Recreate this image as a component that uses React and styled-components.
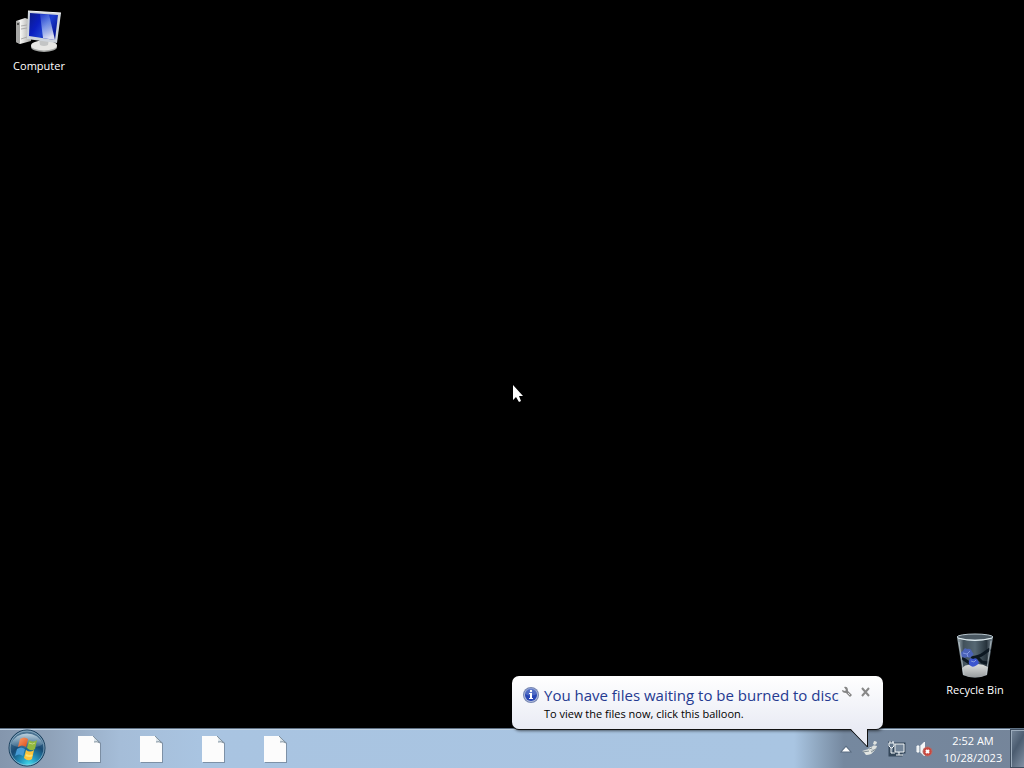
import React from "react";
import styled, { createGlobalStyle } from "styled-components";

const GlobalStyle = createGlobalStyle`
  * { box-sizing: border-box; }
  body {
    margin: 0;
    background: #000;
    font-family: "Open Sans", "Noto Sans", sans-serif;
    font-size: 11px;
    line-height: 16px;
    overflow: hidden;
  }
  button { font: inherit; border: 0; padding: 0; background: none; color: inherit; }
  svg { display: block; }
`;

const Screen = styled.div`
  position: relative;
  min-height: 100vh;
  display: flex;
  flex-direction: column;
  background: #000;
`;

const Desktop = styled.main`
  flex: 1;
  display: flex;
  justify-content: space-between;
  padding: 8px 8px 30px 0;
`;

const Shortcut = styled.button`
  align-self: ${(p) => (p.$low ? "flex-end" : "flex-start")};
  width: ${(p) => (p.$low ? 82 : 78)}px;
  display: flex;
  flex-direction: column;
  align-items: center;
  gap: 2px;
  color: #fff;
  white-space: nowrap;
`;

const Pointer = styled.svg`
  position: absolute;
  left: 50%;
  top: 50%;
`;

const Taskbar = styled.footer`
  height: 40px;
  display: flex;
  align-items: stretch;
  border-top: 1px solid #5f7184;
  box-shadow: inset 0 1px 0 #c0d2e4;
  background: linear-gradient(90deg, #8496ad 0, #8fa2b9 50px, #a5bdd8 120px, #a9c4e1 200px,
    #a9c5e2 calc(100% - 230px), #8fa7c0 calc(100% - 206px), #75889f calc(100% - 180px), #75859a 100%);
`;

const StartButton = styled.button`
  width: 58px;
  padding-left: 7px;
`;

const Tasks = styled.nav`
  flex: 1;
  display: flex;
`;

const Task = styled.button`
  width: 62px;
  display: flex;
  align-items: center;
  justify-content: center;
`;

const Tray = styled.div`
  display: flex;
  align-items: center;
  color: #fff;
`;

const TrayButton = styled.button`
  width: 24px;
  height: 24px;
  display: flex;
  align-items: center;
  justify-content: center;
`;

const TrayIcons = styled.div`
  display: flex;
  gap: 3px;
`;

const Clock = styled.button`
  width: 74px;
  line-height: 17px;
  padding-top: 1px;
  text-align: center;
`;

const ShowDesktop = styled.button`
  align-self: stretch;
  width: 14px;
  border: 1px solid #3f4e60;
  border-right: 0;
  box-shadow: inset 1px 1px 0 #9cacbc;
  background: linear-gradient(120deg, #76879a, #4b5c70 45%, #8291a4);
`;

const Balloon = styled.section`
  position: absolute;
  right: 141px;
  bottom: 39px;
  width: 371px;
  height: 53px;
  display: flex;
  align-items: flex-start;
  padding: 10px 12px 0 10px;
  border-radius: 7px;
  background: linear-gradient(#fff, #e9ebf4);
  box-shadow: 0 1px 0 #111, 1px 2px 3px rgba(0, 0, 0, 0.55);
`;

const Message = styled.div`
  flex: 1;
  margin-left: 4px;
  white-space: nowrap;
  color: #000;
`;

const Title = styled.h1`
  margin: 0;
  font-size: 15px;
  line-height: 18px;
  font-weight: 400;
  color: #253a91;
`;

const Detail = styled.p`
  margin: 0;
  line-height: 20px;
`;

const BalloonActions = styled.div`
  display: flex;
  gap: 8px;
`;

const Tail = styled.svg`
  position: absolute;
  right: 12px;
  top: 52px;
`;

function ComputerIcon() {
  return (
    <svg width="48" height="48" viewBox="0 0 48 48" aria-hidden="true">
      <defs>
        <linearGradient id="screen" x1="0" y1="0" x2="1" y2=".6">
          <stop offset="0" stopColor="#0c1c86" />
          <stop offset=".4" stopColor="#0b1fc0" />
          <stop offset=".65" stopColor="#1d3fd0" />
          <stop offset="1" stopColor="#071699" />
        </linearGradient>
        <linearGradient id="shine" x1="0" y1="0" x2=".3" y2="1">
          <stop offset="0" stopColor="#6d9cf0" stopOpacity=".25" />
          <stop offset="1" stopColor="#fff" stopOpacity=".85" />
        </linearGradient>
        <linearGradient id="tower" x1="0" x2="1">
          <stop offset="0" stopColor="#bbb" />
          <stop offset=".3" stopColor="#f4f4f2" />
          <stop offset="1" stopColor="#a5a5a3" />
        </linearGradient>
      </defs>
      <path d="M1 13 10 10 16 12V33L5 36 1 34z" fill="url(#tower)" />
      <path d="M1 13 5 14V36L1 34z" fill="#a6a6a4" />
      <path d="M6 18l6-1M6 21l6-1M6 31l6-2" stroke="#aaa" />
      <circle cx="3" cy="16" r="1" fill="#333" />
      <ellipse cx="29" cy="39" rx="13" ry="5" fill="#a2a4a2" />
      <ellipse cx="29" cy="37.500" rx="13" ry="5" fill="#e7e7e4" />
      <path d="M24 30h10l-1 7q-4 2-8 0z" fill="#c3c5c5" />
      <path d="M13 3 46 5 42 35 12 31z" fill="#cfd5dc" />
      <path d="M15 5 43 7 40 32 14 28z" fill="url(#screen)" />
      <path d="M25 6 34 6.500 40 32 28 30z" fill="url(#shine)" />
      <path d="M13 3 46 5" stroke="#f8f8f8" />
    </svg>
  );
}

function BinIcon() {
  return (
    <svg width="48" height="48" viewBox="0 0 48 48" aria-hidden="true">
      <defs>
        <linearGradient id="glass" x1="0" x2="1">
          <stop offset="0" stopColor="#a6b4bb" />
          <stop offset=".18" stopColor="#42515b" />
          <stop offset=".5" stopColor="#566873" />
          <stop offset=".82" stopColor="#27333c" />
          <stop offset="1" stopColor="#8998a3" />
        </linearGradient>
        <linearGradient id="base" x1="0" y1="0" x2="0" y2="1">
          <stop offset="0" stopColor="#dfe1df" />
          <stop offset="1" stopColor="#979b9d" />
        </linearGradient>
      </defs>
      <path d="M6 5 42 5 36 43Q24 48 12 43z" fill="url(#glass)" />
      <path d="M11 36Q15 32 20 33Q29 30 37 35L36 43Q24 48 12 43z" fill="url(#base)" />
      <path d="M20 26Q28 25 32 22L39 17M20 32Q14 28 11 26M25 24l6 6 6 1" fill="none" stroke="#0c1721" strokeWidth="3" />
      <path d="M10 24q-1-4 2-5 1-4 4-2 4-1 5 3 3 2 0 4-2 3-5 1-3 2-6-1z" fill="#4b63b8" />
      <path d="M18 29q1-4 4-2 4-2 5 2 2 2-1 4-4 3-6 1-3-1-2-5z" fill="#3c56cf" />
      <path d="M12 21l4 1 3-3m-3 3 1 3m3 4 3 1 2-2" fill="none" stroke="#8397df" />
      <ellipse cx="24" cy="5" rx="18" ry="3" fill="#4a5862" stroke="#b8c7cf" />
      <path d="M7 6q17 5 34 0" fill="none" stroke="#e1edf0" />
      <path d="M8 10l5 33M40 9l-5 34" stroke="#c6d0d4" opacity=".65" />
    </svg>
  );
}

function StartIcon() {
  return (
    <svg width="40" height="39" viewBox="0 0 40 39" aria-hidden="true">
      <defs>
        <radialGradient id="orb" cx="55%" cy="98%" r="95%">
          <stop offset="0" stopColor="#48dfec" />
          <stop offset=".28" stopColor="#2293bd" />
          <stop offset=".6" stopColor="#184a73" />
          <stop offset="1" stopColor="#557b98" />
        </radialGradient>
        <linearGradient id="gloss" x1="0" y1="0" x2="0" y2="1">
          <stop offset="0" stopColor="#dbeaf2" stopOpacity=".8" />
          <stop offset="1" stopColor="#a8c9dd" stopOpacity=".15" />
        </linearGradient>
        <linearGradient id="red" x1="0" y1="0" x2="1" y2="1">
          <stop offset="0" stopColor="#f7a06d" />
          <stop offset="1" stopColor="#df4c18" />
        </linearGradient>
      </defs>
      <circle cx="20" cy="19" r="18" fill="url(#orb)" stroke="#153b59" />
      <circle cx="20" cy="19" r="17" fill="none" stroke="#a8c6d8" strokeOpacity=".65" />
      <path d="M4 15A17 16 0 0 1 36 15Q31 19 20 19T4 15z" fill="url(#gloss)" />
      <path d="M13 10q4-3 8 0l-2 8q-4-3-8 0z" fill="url(#red)" />
      <path d="M22 11q4 3 8 0l-2 9q-4 3-8-1z" fill="#91b83e" />
      <path d="M10 20q4-3 8 0l-2 7q-4-3-8 0z" fill="#469bd5" />
      <path d="M19 21q4 3 8 0l-2 9q-4 3-8-1z" fill="#fdc43a" />
      <path d="M22 14q4 2 6 0" stroke="#c6d785" fill="none" />
      <path d="M19 26q4 2 6 0" stroke="#ffe16d" strokeWidth="2" fill="none" />
    </svg>
  );
}

function FileIcon() {
  return (
    <svg width="26" height="30" viewBox="0 0 26 30" aria-hidden="true">
      <path d="M3 4h16l6 5v20H3z" fill="#6f8093" opacity=".75" />
      <path d="M2 2h15l7 7v19H2z" fill="#fcfcfc" />
      <path d="M17 2q2 3 1 6 3-1 6 1z" fill="#d9e3e9" />
      <path d="M17 2l7 7q-3-2-6-1" fill="none" stroke="#8393a0" />
    </svg>
  );
}

function InfoIcon() {
  return (
    <svg width="18" height="18" viewBox="0 0 18 18" aria-label="Information">
      <circle cx="9" cy="9" r="8" fill="#7585b2" />
      <circle cx="9" cy="9" r="7" fill="#b2bddc" />
      <circle cx="9" cy="9" r="6" fill="#2846b5" />
      <path d="M3 8a6 6 0 0 1 12 0q-6 3-12 0z" fill="#6983cf" opacity=".6" />
      <circle cx="9" cy="5" r="1.2" fill="white" />
      <path d="M7 7h3v5h1v1H7v-1h1V8H7z" fill="#fff" />
    </svg>
  );
}

export default function App() {
  return (
    <>
      <GlobalStyle />
      <Screen>
        <Desktop>
          <Shortcut><ComputerIcon /><span>Computer</span></Shortcut>
          <Shortcut $low><BinIcon /><span>Recycle Bin</span></Shortcut>
        </Desktop>
        <Taskbar>
          <StartButton aria-label="Start"><StartIcon /></StartButton>
          <Tasks aria-label="Pinned items">
            {[1, 2, 3, 4].map((item) => (
              <Task key={item} aria-label={`File ${item}`}><FileIcon /></Task>
            ))}
          </Tasks>
          <Tray>
            <TrayButton aria-label="Show hidden icons">
              <svg width="12" height="8" viewBox="0 0 12 8"><path d="M6 2 10 6.500H2z" fill="#fff" stroke="#5b6d82" strokeWidth="2" paintOrder="stroke" /></svg>
            </TrayButton>
            <TrayIcons>
              <TrayButton aria-label="Disc burning">
                <svg width="18" height="18" viewBox="0 0 18 18">
                  <path d="M1 11l6-2 6-4 3 1-1 3-5 5-4 1-2-2z" fill="#bfc6c8" />
                  <path d="M2 11l5-1 2-3 3 1-3 3 5-1-4 4-5 1z" fill="#e4e7e3" />
                  <path d="M13 1q3 0 3 2l-2 2-2-1zM12 6h4l-2 3h-4z" fill="#dfe2df" />
                  <path d="M2 12l6-1m2 1 5-3M8 9l3-1" stroke="#7f8c94" />
                </svg>
              </TrayButton>
              <TrayButton aria-label="Network">
                <svg width="20" height="18" viewBox="0 0 20 18">
                  <path d="M3 1v14h12M8 4h9v8h-3v3H9v-3H7z" fill="none" stroke="#34475a" strokeWidth="3" />
                  <path d="M8 4h9v8H8z" fill="#74869a" stroke="#f3f7f8" />
                  <path d="M12 12v3M9 15h7M4 8v5h4" fill="none" stroke="#f3f7f8" />
                  <path d="M3 1v2M6 1v2M2 3h5v3L5 8H4L2 6z" fill="#61758a" stroke="#f3f7f8" />
                </svg>
              </TrayButton>
              <TrayButton aria-label="Volume muted">
                <svg width="18" height="18" viewBox="0 0 18 18">
                  <path d="M2 6h2v6H2z" fill="#dbe3e7" stroke="#fff" />
                  <path d="M5 6l4-4h1v14H9l-4-4z" fill="#f4f6f7" />
                  <path d="M5 6v6" stroke="#94a1ad" />
                  <circle cx="12.500" cy="11.500" r="4.500" fill="#c8473e" stroke="#b86d68" />
                  <path d="M11 10l3 3m0-3-3 3" stroke="#fff" strokeWidth="2" />
                </svg>
              </TrayButton>
            </TrayIcons>
            <Clock><time dateTime="2023-10-28T02:52">2:52 AM<br />10/28/2023</time></Clock>
            <ShowDesktop aria-label="Show desktop" />
          </Tray>
        </Taskbar>
        <Balloon role="status">
          <InfoIcon />
          <Message>
            <Title>You have files waiting to be burned to disc</Title>
            <Detail>To view the files now, click this balloon.</Detail>
          </Message>
          <BalloonActions>
            <button aria-label="Notification settings">
              <svg width="12" height="12" viewBox="0 0 12 12">
                <path d="M3 1q4-1 4 4l4 4-2 2-4-4Q1 7 1 4l3 1 1-1z" fill="#858585" />
                <path d="M7 7l2 2" stroke="#ddd" />
              </svg>
            </button>
            <button aria-label="Close">
              <svg width="10" height="12" viewBox="0 0 10 12"><path d="M1 2l7 8M8 2l-7 8" stroke="#888" strokeWidth="2" /></svg>
            </button>
          </BalloonActions>
          <Tail width="24" height="22" viewBox="0 0 24 22" aria-hidden="true">
            <path d="M3 0H21V19z" fill="#e9ebf4" />
            <path d="M3 1 20.500 19V1" fill="none" stroke="#111" />
          </Tail>
        </Balloon>
        <Pointer width="14" height="20" viewBox="0 0 14 20" aria-hidden="true">
          <path d="M1 1v15l3-3 3 5 2-1-2-5h4z" fill="#fff" />
        </Pointer>
      </Screen>
    </>
  );
}
